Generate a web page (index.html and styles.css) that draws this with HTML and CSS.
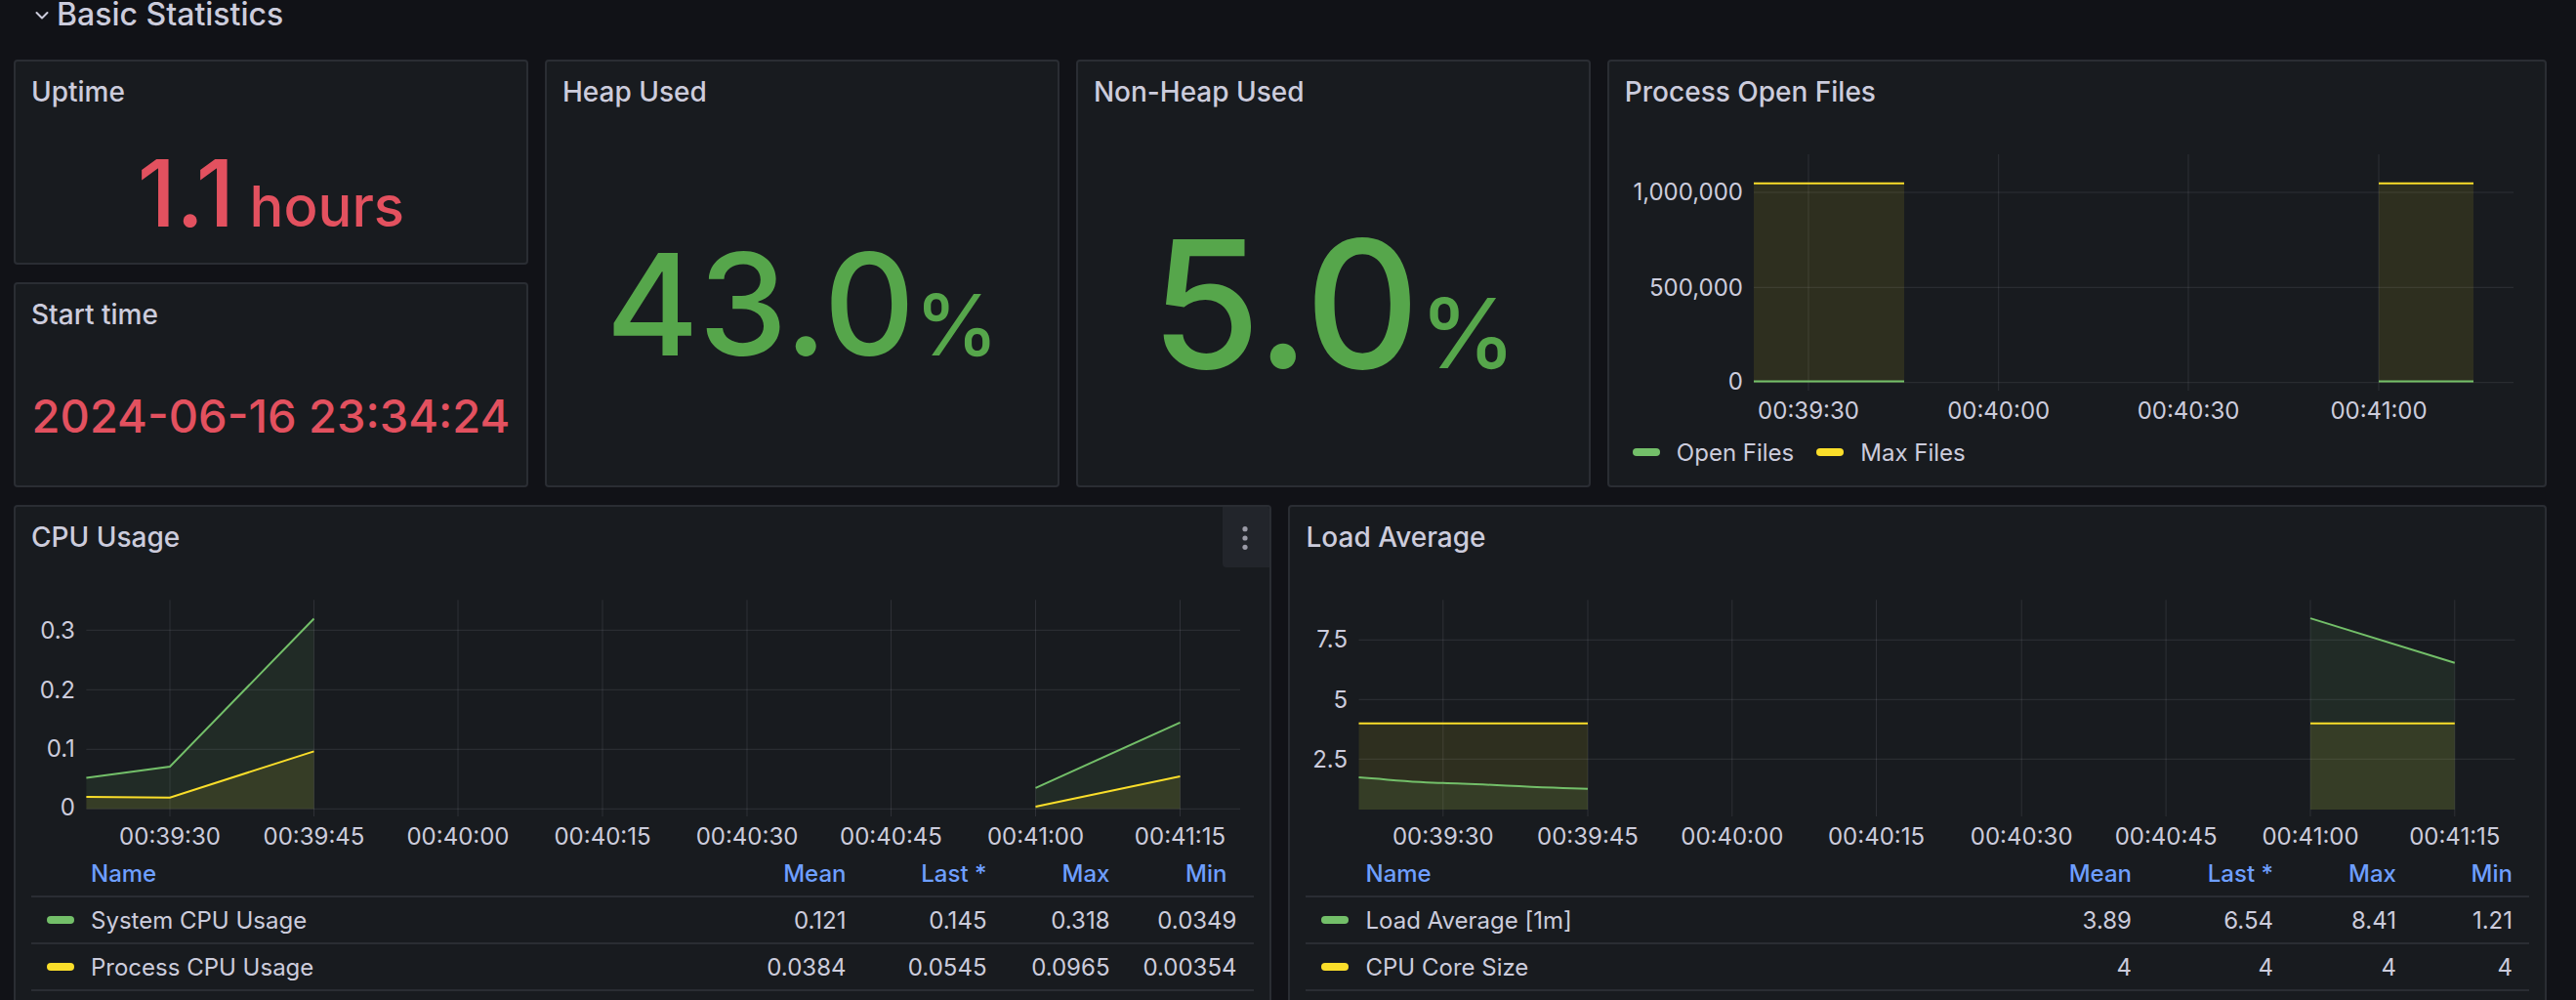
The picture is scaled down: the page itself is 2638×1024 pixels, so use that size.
FILE: index.html
```html
<!DOCTYPE html>
<html lang="en">
<head>
<meta charset="utf-8">
<title>Basic Statistics</title>
<link rel="stylesheet" href="styles.css">
</head>
<body>
<div class="dashboard">
  <div class="row-header">
    <svg class="chevron" width="14" height="10" viewBox="0 0 14 10"><polyline points="1.5,2 7,7.5 12.5,2" fill="none" stroke="#ccccdc" stroke-width="2" stroke-linecap="round" stroke-linejoin="round"/></svg>
    <span class="row-title">Basic Statistics</span>
  </div>

  <div class="grid">
    <section class="panel p-uptime">
      <header class="panel-header"><h2 class="panel-title">Uptime</h2></header>
      <div class="stat"><span class="stat-value red size-m"><span class="num">1.1</span><span class="unit unit-m">&nbsp;hours</span></span></div>
    </section>

    <section class="panel p-start">
      <header class="panel-header"><h2 class="panel-title">Start time</h2></header>
      <div class="stat"><span class="stat-value red size-s">2024-06-16 23:34:24</span></div>
    </section>

    <section class="panel p-heap">
      <header class="panel-header"><h2 class="panel-title">Heap Used</h2></header>
      <div class="stat"><span class="stat-value green size-l"><span class="num">43.0</span><span class="unit unit-l">%</span></span></div>
    </section>

    <section class="panel p-nonheap">
      <header class="panel-header"><h2 class="panel-title">Non-Heap Used</h2></header>
      <div class="stat"><span class="stat-value green size-xl"><span class="num">5.0</span><span class="unit unit-xl">%</span></span></div>
    </section>

    <section class="panel p-files">
      <header class="panel-header"><h2 class="panel-title">Process Open Files</h2></header>
      <svg class="chart" width="958" height="315" viewBox="0 0 958 315">
        <g class="grid-lines">
          <line x1="148" y1="72" x2="926" y2="72"/>
          <line x1="148" y1="169.3" x2="926" y2="169.3"/>
          <line x1="148" y1="266.7" x2="926" y2="266.7"/>
          <line x1="204" y1="33" x2="204" y2="275"/>
          <line x1="398.7" y1="33" x2="398.7" y2="275"/>
          <line x1="593" y1="33" x2="593" y2="275"/>
          <line x1="788" y1="33" x2="788" y2="275"/>
        </g>
        <g class="axis-text" text-anchor="end">
          <text x="137" y="80.4">1,000,000</text>
          <text x="137" y="177.7">500,000</text>
          <text x="137" y="274.4">0</text>
        </g>
        <g class="axis-text" text-anchor="middle">
          <text x="204" y="303.7">00:39:30</text>
          <text x="398.7" y="303.7">00:40:00</text>
          <text x="593" y="303.7">00:40:30</text>
          <text x="788" y="303.7">00:41:00</text>
        </g>
        <rect class="fill-yellow" x="148" y="62.7" width="154" height="204"/>
        <rect class="fill-yellow" x="788" y="62.7" width="97" height="204"/>
        <path class="line-yellow" d="M148,62.7 L302,62.7 M788,62.7 L885,62.7"/>
        <path class="line-green" d="M148,265.6 L302,265.6 M788,265.6 L885,265.6"/>
      </svg>
      <div class="legend-list">
        <span class="legend-item"><i class="swatch sw-green"></i>Open Files</span>
        <span class="legend-item"><i class="swatch sw-yellow"></i>Max Files</span>
      </div>
    </section>

    <section class="panel p-cpu">
      <header class="panel-header"><h2 class="panel-title">CPU Usage</h2></header>
      <div class="panel-menu">
        <svg width="48" height="62" viewBox="0 0 48 62"><circle cx="23" cy="22.7" r="2.6"/><circle cx="23" cy="32" r="2.6"/><circle cx="23" cy="41.3" r="2.6"/></svg>
      </div>
      <svg class="chart" width="1284" height="290" viewBox="0 0 1284 290">
        <g class="grid-lines">
          <line x1="72.4" y1="64.3" x2="1254" y2="64.3"/>
          <line x1="72.4" y1="125.3" x2="1254" y2="125.3"/>
          <line x1="72.4" y1="186.3" x2="1254" y2="186.3"/>
          <line x1="72.4" y1="247.3" x2="1254" y2="247.3"/>
          <line x1="158" y1="33.3" x2="158" y2="255"/>
          <line x1="305.5" y1="33.3" x2="305.5" y2="255"/>
          <line x1="453" y1="33.3" x2="453" y2="255"/>
          <line x1="601" y1="33.3" x2="601" y2="255"/>
          <line x1="749" y1="33.3" x2="749" y2="255"/>
          <line x1="896.5" y1="33.3" x2="896.5" y2="255"/>
          <line x1="1044.5" y1="33.3" x2="1044.5" y2="255"/>
          <line x1="1192.5" y1="33.3" x2="1192.5" y2="255"/>
        </g>
        <g class="axis-text" text-anchor="end">
          <text x="60.8" y="72.7">0.3</text>
          <text x="60.8" y="133.7">0.2</text>
          <text x="60.8" y="194.4">0.1</text>
          <text x="60.8" y="254.4">0</text>
        </g>
        <g class="axis-text" text-anchor="middle">
          <text x="158" y="283.7">00:39:30</text>
          <text x="305.5" y="283.7">00:39:45</text>
          <text x="453" y="283.7">00:40:00</text>
          <text x="601" y="283.7">00:40:15</text>
          <text x="749" y="283.7">00:40:30</text>
          <text x="896.5" y="283.7">00:40:45</text>
          <text x="1044.5" y="283.7">00:41:00</text>
          <text x="1192.5" y="283.7">00:41:15</text>
        </g>
        <path class="fill-green" d="M72.4,215.6 L158,204 L305.5,52.5 L305.5,247.3 L72.4,247.3 Z"/>
        <path class="fill-green" d="M1044.5,225.9 L1192.5,158.8 L1192.5,247.3 L1044.5,247.3 Z"/>
        <path class="fill-yellow" d="M72.4,235 L158,235.7 L305.5,188.4 L305.5,247.3 L72.4,247.3 Z"/>
        <path class="fill-yellow" d="M1044.5,245.1 L1192.5,214.1 L1192.5,247.3 L1044.5,247.3 Z"/>
        <path class="line-green" d="M72.4,215.6 L158,204 L305.5,52.5"/>
        <path class="line-green" d="M1044.5,225.9 L1192.5,158.8"/>
        <path class="line-yellow" d="M72.4,235 L158,235.7 L305.5,188.4"/>
        <path class="line-yellow" d="M1044.5,245.1 L1192.5,214.1"/>
      </svg>
      <div class="legend legend-cpu">
        <div class="lg-row lg-head">
          <span class="lg-name">Name</span><span>Mean</span><span>Last *</span><span>Max</span><span class="lg-last lg-min-head">Min</span>
        </div>
        <div class="lg-row">
          <span class="lg-name"><i class="swatch sw-green"></i>System CPU Usage</span><span>0.121</span><span>0.145</span><span>0.318</span><span class="lg-last">0.0349</span>
        </div>
        <div class="lg-row">
          <span class="lg-name"><i class="swatch sw-yellow"></i>Process CPU Usage</span><span>0.0384</span><span>0.0545</span><span>0.0965</span><span class="lg-last">0.00354</span>
        </div>
      </div>
    </section>

    <section class="panel p-load">
      <header class="panel-header"><h2 class="panel-title">Load Average</h2></header>
      <svg class="chart" width="1284" height="290" viewBox="0 0 1284 290">
        <g class="grid-lines">
          <line x1="70.5" y1="74.3" x2="1254.5" y2="74.3"/>
          <line x1="70.5" y1="135.3" x2="1254.5" y2="135.3"/>
          <line x1="70.5" y1="196.3" x2="1254.5" y2="196.3"/>
          <line x1="156.8" y1="33.3" x2="156.8" y2="255"/>
          <line x1="305" y1="33.3" x2="305" y2="255"/>
          <line x1="452.8" y1="33.3" x2="452.8" y2="255"/>
          <line x1="600.5" y1="33.3" x2="600.5" y2="255"/>
          <line x1="749.2" y1="33.3" x2="749.2" y2="255"/>
          <line x1="897.1" y1="33.3" x2="897.1" y2="255"/>
          <line x1="1045" y1="33.3" x2="1045" y2="255"/>
          <line x1="1192.8" y1="33.3" x2="1192.8" y2="255"/>
        </g>
        <g class="axis-text" text-anchor="end">
          <text x="59" y="81.7">7.5</text>
          <text x="59" y="143.7">5</text>
          <text x="59" y="204.7">2.5</text>
        </g>
        <g class="axis-text" text-anchor="middle">
          <text x="156.8" y="283.7">00:39:30</text>
          <text x="305" y="283.7">00:39:45</text>
          <text x="452.8" y="283.7">00:40:00</text>
          <text x="600.5" y="283.7">00:40:15</text>
          <text x="749.2" y="283.7">00:40:30</text>
          <text x="897.1" y="283.7">00:40:45</text>
          <text x="1045" y="283.7">00:41:00</text>
          <text x="1192.8" y="283.7">00:41:15</text>
        </g>
        <path class="fill-yellow" d="M70.5,159.7 L305,159.7 L305,248 L70.5,248 Z"/>
        <path class="fill-green" d="M70.5,215.1 C110,218 130,220.2 156.8,220.8 C200,222 250,225.3 305,226.8 L305,248 L70.5,248 Z"/>
        <path class="fill-green" d="M1045,52.1 L1192.8,97.7 L1192.8,248 L1045,248 Z"/>
        <path class="fill-yellow" d="M1045,159.7 L1192.8,159.7 L1192.8,248 L1045,248 Z"/>
        <path class="line-yellow" d="M70.5,159.7 L305,159.7 M1045,159.7 L1192.8,159.7"/>
        <path class="line-green" d="M70.5,215.1 C110,218 130,220.2 156.8,220.8 C200,222 250,225.3 305,226.8"/>
        <path class="line-green" d="M1045,52.1 L1192.8,97.7"/>
      </svg>
      <div class="legend legend-load">
        <div class="lg-row lg-head">
          <span class="lg-name">Name</span><span>Mean</span><span>Last *</span><span>Max</span><span class="lg-last">Min</span>
        </div>
        <div class="lg-row">
          <span class="lg-name"><i class="swatch sw-green"></i>Load Average [1m]</span><span>3.89</span><span>6.54</span><span>8.41</span><span class="lg-last">1.21</span>
        </div>
        <div class="lg-row">
          <span class="lg-name"><i class="swatch sw-yellow"></i>CPU Core Size</span><span>4</span><span>4</span><span>4</span><span class="lg-last">4</span>
        </div>
      </div>
    </section>
  </div>
</div>
</body>
</html>
```

FILE: styles.css
```css
html, body {
  margin: 0;
  padding: 0;
  background: #111217;
  overflow: hidden;
}

body {
  font-family: Inter, "Noto Sans", "Liberation Sans", sans-serif;
  color: #ccccdc;
}

.dashboard {
  width: 2638px;
  box-sizing: border-box;
  padding: 0 30px 0 14px;
  display: flex;
  flex-direction: column;
  gap: 17px;
}

.row-header {
  height: 44px;
  display: flex;
  align-items: flex-start;
  padding-left: 22px;
}

.chevron {
  display: block;
  margin-top: 11px;
  margin-right: 8px;
  flex: none;
}

.row-title {
  font-size: 32px;
  line-height: 29px;
  font-weight: 500;
  color: #ccccdc;
}

.grid {
  display: grid;
  grid-template-columns: repeat(24, minmax(0, 1fr));
  grid-template-rows: 210px 210px 540px;
  column-gap: 17px;
  row-gap: 18px;
}

.p-uptime { grid-column: 1 / span 5; grid-row: 1; }
.p-start { grid-column: 1 / span 5; grid-row: 2; }
.p-heap { grid-column: 6 / span 5; grid-row: 1 / span 2; }
.p-nonheap { grid-column: 11 / span 5; grid-row: 1 / span 2; }
.p-files { grid-column: 16 / span 9; grid-row: 1 / span 2; }
.p-cpu { grid-column: 1 / span 12; grid-row: 3; }
.p-load { grid-column: 13 / span 12; grid-row: 3; }

.panel {
  position: relative;
  background: #181b1f;
  border: 2px solid #2a2d33;
  border-radius: 4px;
  box-sizing: border-box;
  display: flex;
  flex-direction: column;
  min-width: 0;
  overflow: hidden;
}

.panel-header {
  height: 62px;
  flex: none;
  display: flex;
  align-items: center;
  padding: 0 16px;
}

.panel-title {
  margin: 0;
  font-size: 28px;
  line-height: 62px;
  font-weight: 500;
  color: #ccccdc;
  white-space: nowrap;
}

.stat {
  flex: 1;
  display: flex;
  align-items: center;
  justify-content: center;
}

.stat-value {
  line-height: 1;
  font-weight: 500;
  white-space: nowrap;
}

.red { color: #e3515f; }
.green { color: #56a64b; }

.size-m { font-size: 95px; }
.size-l { font-size: 145px; }
.size-xl { font-size: 182px; }
.size-s { font-size: 47px; }

.unit-m { font-size: 58px; }
.unit-l { font-size: 86px; }
.unit-xl { font-size: 99px; }

.chart {
  display: block;
  flex: none;
}

.grid-lines line {
  stroke: rgba(204, 204, 220, 0.12);
  stroke-width: 1;
}

.axis-text text {
  font-family: Inter, "Noto Sans", "Liberation Sans", sans-serif;
  font-size: 24px;
  fill: #ccccdc;
}

.fill-green { fill: #73bf69; fill-opacity: 0.1; }
.fill-yellow { fill: #fade2a; fill-opacity: 0.1; }
.line-green { fill: none; stroke: #73bf69; stroke-width: 2; }
.line-yellow { fill: none; stroke: #fade2a; stroke-width: 2; }

.legend-list {
  height: 46px;
  display: flex;
  align-items: center;
  gap: 23px;
  padding-left: 24px;
  font-size: 24px;
}

.legend-item {
  display: flex;
  align-items: center;
  white-space: nowrap;
}

.swatch {
  display: inline-block;
  width: 28px;
  height: 8px;
  border-radius: 4px;
  margin-right: 17px;
  flex: none;
}

.sw-green { background: #73bf69; }
.sw-yellow { background: #fade2a; }

.panel-menu {
  position: absolute;
  top: 0;
  right: 0;
  width: 48px;
  height: 62px;
  background: #22252b;
  border-radius: 0 2px 0 4px;
}

.panel-menu svg {
  display: block;
  fill: #9a9aa6;
}

.legend {
  margin: 0 16px;
  font-size: 24px;
}

.lg-row {
  display: grid;
  height: 46px;
  align-items: center;
  border-bottom: 2px solid #2a2d33;
  white-space: nowrap;
}

.legend-cpu .lg-row { grid-template-columns: minmax(0, 1fr) 140px 144px 126px 148px; }
.legend-load .lg-row { grid-template-columns: minmax(0, 1fr) 140px 145px 126px 136px; }

.lg-row > span {
  text-align: right;
}

.lg-row > .lg-name {
  text-align: left;
  display: flex;
  align-items: center;
  padding-left: 16px;
}

.lg-head > .lg-name {
  padding-left: 61px;
}

.lg-head {
  color: #6e9fff;
  font-weight: 500;
}

.legend-cpu .lg-last { padding-right: 18px; }
.legend-load .lg-last { padding-right: 17px; }
.legend-cpu .lg-min-head { padding-right: 28px; }
```
